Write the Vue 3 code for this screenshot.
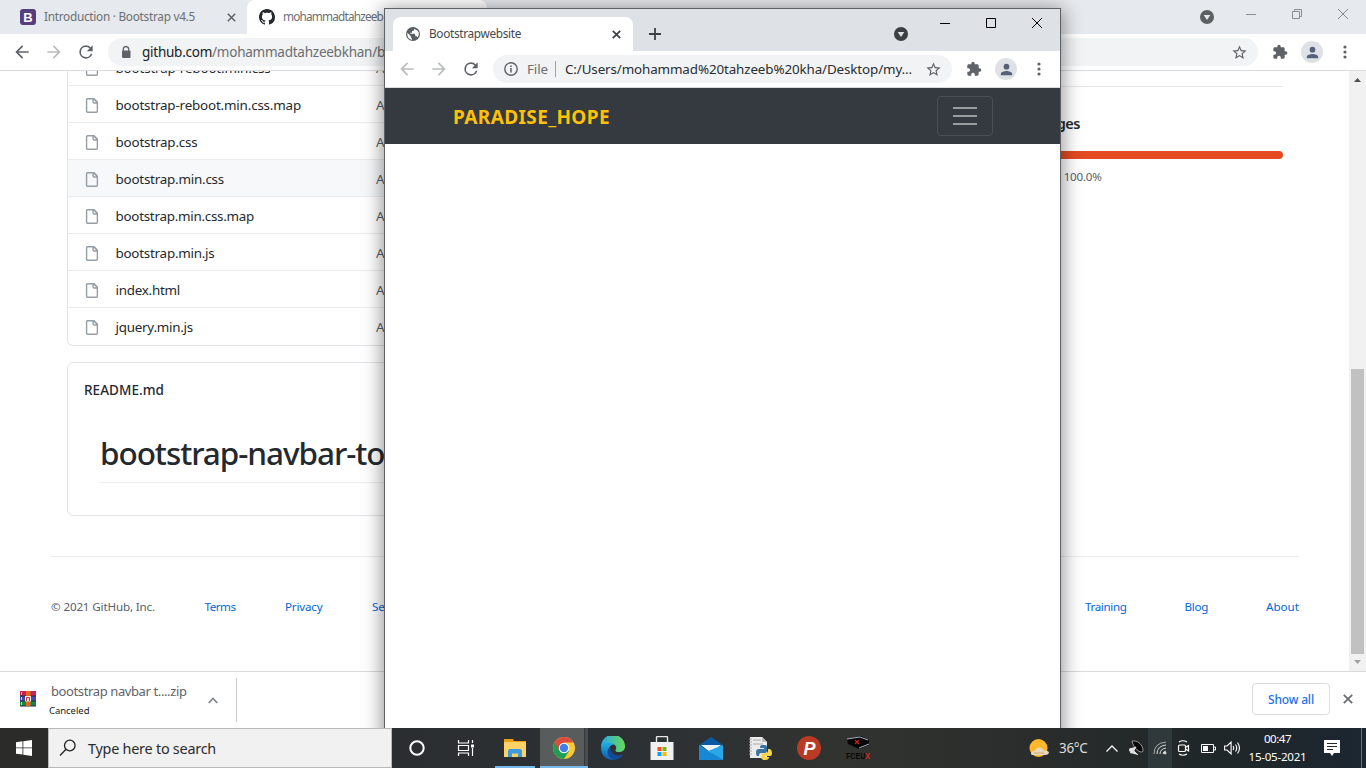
<script setup>
const files = [
  { name: 'bootstrap-reboot.min.css', w: 155 },
  { name: 'bootstrap-reboot.min.css.map', w: 185.5 },
  { name: 'bootstrap.css', w: 82 },
  { name: 'bootstrap.min.css', w: 108.5, active: true },
  { name: 'bootstrap.min.css.map', w: 138.5 },
  { name: 'bootstrap.min.js', w: 99 },
  { name: 'index.html', w: 64.5 },
  { name: 'jquery.min.js', w: 77.5 },
]

// Tracks a label so that it fills the given width in pixels.
const vFit = {
  mounted(el, { value }) {
    const natural = el.getBoundingClientRect().width
    el.style.letterSpacing = (value - natural) / el.textContent.length + 'px'
  },
}

const star = 'M22 9.24l-7.19-.62L12 2 9.19 8.63 2 9.24l5.46 4.73L5.82 21 12 17.27 18.18 21l-1.63-7.03L22 9.24zM12 15.4l-3.76 2.27 1-4.28-3.32-2.88 4.38-.38L12 6.1l1.71 4.04 4.38.38-3.32 2.88 1 4.28L12 15.4z'
const puzzle = 'M20.5 11H19V7c0-1.1-.9-2-2-2h-4V3.5a2.5 2.5 0 0 0-5 0V5H4c-1.1 0-2 .9-2 2v3.8h1.5a2.7 2.7 0 0 1 0 5.4H2V20c0 1.1.9 2 2 2h3.8v-1.5a2.7 2.7 0 0 1 5.4 0V22H17c1.1 0 2-.9 2-2v-4h1.5a2.5 2.5 0 0 0 0-5z'
const back = 'M20 11H7.83l5.59-5.59L12 4l-8 8 8 8 1.41-1.41L7.83 13H20v-2z'
const fwd = 'M12 4l-1.41 1.41L16.17 11H4v2h12.17l-5.58 5.59L12 20l8-8z'
const reload = 'M17.65 6.35A7.96 7.96 0 0 0 12 4a8 8 0 1 0 7.73 10h-2.08A6 6 0 1 1 12 6c1.66 0 3.14.69 4.22 1.78L13 11h7V4l-2.35 2.35z'
const person = 'M12 12a4 4 0 1 0 0-8 4 4 0 0 0 0 8zm0 2c-2.67 0-8 1.34-8 4v2h16v-2c0-2.66-5.33-4-8-4z'
const octocat = 'M8 0C3.58 0 0 3.58 0 8c0 3.54 2.29 6.53 5.47 7.59.4.07.55-.17.55-.38 0-.19-.01-.82-.01-1.49-2.01.37-2.53-.49-2.69-.94-.09-.23-.48-.94-.82-1.13-.28-.15-.68-.52-.01-.53.63-.01 1.08.58 1.23.82.72 1.21 1.87.87 2.33.66.07-.52.28-.87.51-1.07-1.78-.2-3.64-.89-3.64-3.95 0-.87.31-1.59.82-2.15-.08-.2-.36-1.02.08-2.12 0 0 .67-.21 2.2.82.64-.18 1.32-.27 2-.27s1.36.09 2 .27c1.53-1.04 2.2-.82 2.2-.82.44 1.1.16 1.92.08 2.12.51.56.82 1.27.82 2.15 0 3.07-1.87 3.75-3.65 3.95.29.25.54.73.54 1.48 0 1.07-.01 1.93-.01 2.2 0 .21.15.46.55.38A8.01 8.01 0 0 0 16 8c0-4.42-3.58-8-8-8z'
const fileIcon = 'M3.75 1.500a.25.25 0 0 0-.25.25v12.500c0 .14.110.25.25.25h9.500a.25.25 0 0 0 .25-.25V6H10.750A1.750 1.750 0 0 1 9 4.250V1.500H3.750zm6.750.560v2.190c0 .14.110.25.25.25h2.190L10.500 2.060zM2 1.750C2 .780 2.780 0 3.750 0h6.590c.460 0 .900.180 1.230.510l2.920 2.910c.330.330.510.780.510 1.240v9.590A1.750 1.750 0 0 1 13.250 16h-9.500A1.750 1.750 0 0 1 2 14.250V1.750z'
</script>

<template>
  <div class="desktop">
    <div class="browser">
      <header class="strip">
        <div class="tab tab-idle">
          <svg width="16" height="16" viewBox="0 0 16 16"><rect width="16" height="16" rx="3" fill="#563d7c" /><text x="8" y="12.700" text-anchor="middle" font-family="Liberation Sans, sans-serif" font-weight="700" font-size="13" fill="#fff">B</text></svg>
          <span v-fit="151" class="t tab-label">Introduction · Bootstrap v4.5</span>
          <svg class="tab-x" width="9" height="9" viewBox="0 0 9 9"><path d="M.8.8l7.400 7.400M8.200.8L.8 8.200" stroke="#5f6368" stroke-width="1.500" /></svg>
        </div>
        <div class="tab tab-front">
          <svg width="16" height="16" viewBox="0 0 16 16"><path :d="octocat" fill="#24292e" /></svg>
          <span v-fit="100" class="t tab-label">mohammadtahzeeb</span>
        </div>
        <div class="strip-right">
          <svg width="14" height="14" viewBox="0 0 14 14"><circle cx="7" cy="7" r="7" fill="#5c6063" /><path d="M3.700 5h6.600L7 10z" fill="#e6e9ed" /></svg>
          <svg class="wmin" width="10" height="10" viewBox="0 0 10 10"><path d="M0 4.500h10" stroke="#8c8f92" /></svg>
          <svg class="wmax" width="10" height="10" viewBox="0 0 10 10" fill="none" stroke="#8c8f92"><path d="M.5 2.500h7v7h-7zM2.500 2.500v-2h7v7h-2" /></svg>
          <svg width="10" height="10" viewBox="0 0 10 10"><path d="M0 0l10 10M10 0L0 10" stroke="#85888b" /></svg>
        </div>
      </header>
      <div class="toolbar">
        <svg class="nav" width="20" height="20" viewBox="0 0 24 24"><path :d="back" fill="#5f6368" /></svg>
        <svg class="nav" width="20" height="20" viewBox="0 0 24 24"><path :d="fwd" fill="#babcbe" /></svg>
        <svg class="nav" width="20" height="20" viewBox="0 0 24 24"><path :d="reload" fill="#5f6368" /></svg>
        <div class="omni">
          <svg class="lock" width="10" height="13" viewBox="0 0 10 13"><path d="M2.300 5V3.300a2.700 2.700 0 0 1 5.400 0V5" fill="none" stroke="#5f6368" stroke-width="1.300" /><rect x="1" y="4.500" width="8.500" height="7.500" rx="1" fill="#5f6368" /></svg>
          <span v-fit="243" class="t url"><b>github.com</b>/mohammadtahzeebkhan/b</span>
          <svg class="star" width="17" height="17" viewBox="0 0 24 24"><path :d="star" fill="#5f6368" /></svg>
        </div>
        <svg class="puzzle" width="16" height="16" viewBox="0 0 24 24"><path :d="puzzle" fill="#5f6368" /></svg>
        <span class="avatar"><svg width="17" height="17" viewBox="0 0 24 24"><path :d="person" fill="#556177" /></svg></span>
        <svg class="dots" width="4" height="14" viewBox="0 0 4 14" fill="#5f6368"><circle cx="2" cy="2" r="1.600" /><circle cx="2" cy="7" r="1.600" /><circle cx="2" cy="12" r="1.600" /></svg>
      </div>

      <div class="viewport">
        <div class="page">
          <div class="columns">
            <main>
              <div class="files">
                <div v-for="f in files" :key="f.name" class="row" :class="{ active: f.active }">
                  <svg width="15" height="15" viewBox="0 0 16 16"><path :d="fileIcon" fill="#959da5" fill-rule="evenodd" /></svg>
                  <span class="fname"><span v-fit="f.w" class="t">{{ f.name }}</span></span>
                  <span class="t msg">Add files via upload</span>
                </div>
              </div>
              <section class="readme">
                <span v-fit="80" class="t readme-name">README.md</span>
                <h1><span v-fit="346" class="t">bootstrap-navbar-toggle</span></h1>
              </section>
            </main>
            <aside>
              <h2><span v-fit="73" class="t">Languages</span></h2>
              <div class="bar"></div>
              <div class="lang"><span class="t">HTML</span><span v-fit="38" class="t pct">100.0%</span></div>
            </aside>
          </div>
          <footer>
            <div class="links left">
              <span v-fit="104" class="t muted">© 2021 GitHub, Inc.</span>
              <span v-fit="31" class="t">Terms</span>
              <span v-fit="37.500" class="t">Privacy</span>
              <span v-fit="43" class="t">Security</span>
            </div>
            <div class="links right">
              <span v-fit="41.500" class="t">Training</span>
              <span v-fit="23.500" class="t">Blog</span>
              <span v-fit="33" class="t">About</span>
            </div>
          </footer>
        </div>
        <div class="scroll">
          <svg width="7" height="4" viewBox="0 0 7 4"><path d="M0 4h7L3.500 0z" fill="#505050" /></svg>
          <div class="thumb"></div>
          <svg width="7" height="4" viewBox="0 0 7 4"><path d="M0 0h7L3.500 4z" fill="#a3a3a3" /></svg>
        </div>
      </div>

      <div class="shelf">
        <svg class="rar" width="16" height="16" viewBox="0 0 16 16"><rect y="0" width="16" height="5" fill="#c92255" /><rect y="5" width="16" height="5" fill="#454bb0" /><rect y="10" width="16" height="5" fill="#168846" /><path d="M0 5h16M0 10h16M0 15h16" stroke="#222845" /><path d="M1.500 1v3M1.500 6v3M1.500 11v3" stroke="#f2d34c" /><rect x="6" width="4.500" height="15" fill="#e36a1c" /><rect x="5" y="5" width="6" height="5.500" fill="#f4e9df" /><path d="M6.500 10V6.500h3V10" fill="none" stroke="#c63a20" /></svg>
        <div class="dl">
          <span v-fit="135.500" class="t dl-name">bootstrap navbar t....zip</span>
          <span v-fit="40.500" class="t dl-state">Canceled</span>
        </div>
        <svg class="dl-chev" width="10" height="7" viewBox="0 0 10 7"><path d="M.7 6L5 1.500 9.300 6" fill="none" stroke="#80868b" stroke-width="1.700" /></svg>
        <div class="dl-sep"></div>
        <button class="show"><span v-fit="46" class="t">Show all</span></button>
        <svg class="shelf-x" width="10" height="10" viewBox="0 0 10 10"><path d="M.8.8l8.400 8.400M9.200.8L.8 9.200" stroke="#6a6e73" stroke-width="1.800" /></svg>
      </div>
    </div>

    <div class="popup">
      <header class="pstrip">
        <div class="ptab">
          <svg width="16" height="16" viewBox="0 0 24 24"><circle cx="12" cy="12" r="10.500" fill="#5a5e63" /><path d="M3.500 10l5 5v1.500l2 2.500v1.500C6 20 3 16 3.500 10zM14 4.500l-1 2.500-2.500.5V10H8v1.500h6l1.500 1.500v2.500h2l1.500 1.500q2.500-3 1.500-7.500Q19 6 14 4.500z" fill="#fff" /></svg>
          <span v-fit="92" class="t ptab-label">Bootstrapwebsite</span>
          <svg class="px" width="9" height="9" viewBox="0 0 9 9"><path d="M.8.8l7.400 7.400M8.200.8L.8 8.200" stroke="#3c4043" stroke-width="1.700" /></svg>
        </div>
        <svg class="plus" width="12" height="12" viewBox="0 0 12 12"><path d="M6 0v12M0 6h12" stroke="#3c4043" stroke-width="1.800" /></svg>
        <svg class="pdrop" width="14" height="14" viewBox="0 0 14 14"><circle cx="7" cy="7" r="7" fill="#3c4043" /><path d="M3.700 5h6.600L7 10z" fill="#dee1e6" /></svg>
        <div class="pctl">
          <svg width="10" height="10" viewBox="0 0 10 10"><path d="M0 5.500h10" stroke="#000" /></svg>
          <svg width="10" height="10" viewBox="0 0 10 10"><path d="M.5.5h9v9h-9z" fill="none" stroke="#000" /></svg>
          <svg width="10" height="10" viewBox="0 0 10 10"><path d="M0 0l10 10M10 0L0 10" stroke="#000" /></svg>
        </div>
      </header>
      <div class="ptoolbar">
        <svg class="nav" width="20" height="20" viewBox="0 0 24 24"><path :d="back" fill="#babcbe" /></svg>
        <svg class="nav" width="20" height="20" viewBox="0 0 24 24"><path :d="fwd" fill="#babcbe" /></svg>
        <svg class="nav" width="20" height="20" viewBox="0 0 24 24"><path :d="reload" fill="#5f6368" /></svg>
        <div class="omni pomni">
          <svg width="14" height="14" viewBox="0 0 14 14"><circle cx="7" cy="7" r="6.200" fill="none" stroke="#5f6368" stroke-width="1.400" /><path d="M7 6v4.500M7 3.500V5" stroke="#5f6368" stroke-width="1.500" /></svg>
          <span v-fit="21" class="t scheme">File</span>
          <i class="vsep"></i>
          <span v-fit="347" class="t path">C:/Users/mohammad%20tahzeeb%20kha/Desktop/my...</span>
          <svg class="star" width="17" height="17" viewBox="0 0 24 24"><path :d="star" fill="#5f6368" /></svg>
        </div>
        <svg class="puzzle" width="16" height="16" viewBox="0 0 24 24"><path :d="puzzle" fill="#5f6368" /></svg>
        <span class="avatar"><svg width="17" height="17" viewBox="0 0 24 24"><path :d="person" fill="#556177" /></svg></span>
        <svg class="dots" width="4" height="14" viewBox="0 0 4 14" fill="#5f6368"><circle cx="2" cy="2" r="1.600" /><circle cx="2" cy="7" r="1.600" /><circle cx="2" cy="12" r="1.600" /></svg>
      </div>
      <nav class="navbar">
        <span v-fit="157" class="t brand">PARADISE_HOPE</span>
        <button class="toggler"><i></i><i></i><i></i></button>
      </nav>
    </div>

    <div class="taskbar">
      <div class="start"><svg width="16" height="16" viewBox="0 0 16 16" fill="#fff"><path d="M0 2.200l6.500-.9v6.200H0zM7.300 1.200L16 0v7.500H7.300zM0 8.300h6.500v6.300L0 13.700zM7.300 8.300H16V16l-8.700-1.200z" /></svg></div>
      <div class="search">
        <svg width="18" height="18" viewBox="0 0 18 18" fill="none" stroke="#222" stroke-width="1.300"><circle cx="10.800" cy="6.500" r="5.300" /><path d="M7 10.300L1 16.500" /></svg>
        <span v-fit="128" class="t">Type here to search</span>
      </div>
      <div class="apps">
        <div class="app"><svg width="16" height="16" viewBox="0 0 16 16"><circle cx="8" cy="8" r="6.700" fill="none" stroke="#fff" stroke-width="2" /></svg></div>
        <div class="app"><svg width="18" height="16" viewBox="0 0 18 16" fill="none" stroke="#fff" stroke-width="1.200"><path d="M1.500 0v3h10V0M1.500 16v-3h10v3M1.500 5.500h10v5h-10zM15.500 0v3M15.500 8v8" /><path d="M14 4.500h3v3h-3z" fill="#fff" stroke="none" /></svg></div>
        <div class="app open"><svg width="22" height="19" viewBox="0 0 22 19"><path d="M0 0h9l1 2h12v16H0z" fill="#e8a113" /><path d="M0 3h22v15H0z" fill="#fcd266" /><path d="M4 18v-6.500l1.500-1.500h11l1.500 1.500V18h-4v-3.500H8V18z" fill="#3c9ade" /></svg></div>
        <div class="app open current"><svg width="22" height="22" viewBox="0 0 22 22"><circle cx="11" cy="11" r="11" fill="#fcc934" /><path d="M11 11L1.500 5.500A11 11 0 0 0 11 22l5-8z" fill="#1e9e55" /><path d="M1.500 5.500A11 11 0 0 1 20.500 5.500H11v5.500l-4.800 2.800z" fill="#de4a3d" /><circle cx="11" cy="11" r="5.200" fill="#fff" /><circle cx="11" cy="11" r="4.200" fill="#3f7ee8" /></svg></div>
        <div class="app"><svg width="24" height="24" viewBox="0 0 24 24"><defs><linearGradient id="eg" x1="0" x2="1"><stop offset="0" stop-color="#2aa7e5" /><stop offset="1" stop-color="#67db58" /></linearGradient><linearGradient id="eb" x1="0" x2="0" y1="0" y2="1"><stop offset="0" stop-color="#1db2e6" /><stop offset="1" stop-color="#1258a8" /></linearGradient></defs><path d="M0 11a12 12 0 0 1 24-.5c0 4-3 5.500-6 5.500-2.500 0-4-1-3.500-2C18 8 8 5 0 11z" fill="url(#eg)" /><path d="M0 12C1 6 9 5 13 8.500c-5 .5-6 5-3.500 8.500 2.700 3.700 7.500 4 12.500 1.500C17 27 0 26 0 12z" fill="url(#eb)" /><path d="M9 11c-4 3-3 10 3 12.500 4 .5 8-1.500 10-5-5 2-11.500 1.500-13-7.500z" fill="#124b93" /></svg></div>
        <div class="app"><svg width="24" height="24" viewBox="0 0 24 24"><path d="M6.500 7V1.500q0-1 1-1h9q1 0 1 1V7" fill="none" stroke="#e7e7e7" stroke-width="1.400" /><path d="M.5 6h23v18h-23z" fill="#f1f1f1" /><path d="M7.500 11h4v4h-4z" fill="#f25022" /><path d="M12.500 11h4v4h-4z" fill="#7fba00" /><path d="M7.500 16h4v4h-4z" fill="#00a4ef" /><path d="M12.500 16h4v4h-4z" fill="#ffb900" /></svg></div>
        <div class="app"><svg width="24" height="23" viewBox="0 0 24 23"><path d="M0 8l12-8 12 8v2H0z" fill="#0c59a4" /><path d="M2 8h20L12 16z" fill="#eef3f8" /><path d="M0 8l24 15H0z" fill="#1688d5" /><path d="M24 8v15L9 14z" fill="#29a7e9" /></svg></div>
        <div class="app"><svg width="24" height="24" viewBox="0 0 24 24"><path d="M2 1h12l5 5v16H2z" fill="#ececec" /><path d="M14 1v5h5" fill="#bbb" /><path d="M1 3h3M1 6h3M1 9h3M1 12h3M1 15h3M1 18h3M5 4h8M5 8h10" stroke="#aaa" /><path d="M14 9h3q2 0 2 2v4q0 2-2 2h-4q-2 0-2 3H9q-1-1-1-4 0-3 3-3h5v-1h-4q0-3 2-3z" fill="#3973a6" /><path d="M20 13h2q2 1 2 4t-2 3h-5v1h4q0 3-3.500 3T13 22v-3q0-2 2-2h3q2 0 2-2z" fill="#ffd748" /></svg></div>
        <div class="app"><svg width="24" height="24" viewBox="0 0 24 24"><circle cx="12" cy="12" r="12" fill="#b93b25" /><text x="12.500" y="18.500" text-anchor="middle" font-family="Liberation Sans, sans-serif" font-weight="700" font-style="italic" font-size="18" fill="#fff">P</text></svg></div>
        <div class="app"><svg width="26" height="24" viewBox="0 0 26 24"><path d="M2 3l14-3 8 4v5l-10 4L3 8z" fill="#050505" /><path d="M2 3l13-2 8 3M14 12l10-4" fill="none" stroke="#a8b1c8" /><path d="M10 4l4 4M14 4l-4 4" stroke="#cf251b" stroke-width="1.200" /><text x="1" y="22.500" textLength="24" lengthAdjust="spacingAndGlyphs" font-family="Liberation Sans, sans-serif" font-weight="700" font-size="9.500" fill="#080808">FCEU<tspan fill="#db2918">X</tspan></text></svg></div>
      </div>
      <div class="tray">
        <div class="weather">
          <svg width="21" height="19" viewBox="0 0 21 19"><circle cx="9.500" cy="9" r="9" fill="#fdb92b" /><path d="M2 15q0-3 4-3 1-4 5-3.500 3 .5 3.500 3Q20 11 20 14q-1 2-4 2H4q-2 0-2-1z" fill="#e9d9c2" /><path d="M5 14h10" stroke="#d2a566" /></svg>
          <span v-fit="28.500" class="t">36°C</span>
        </div>
        <div class="ti"><svg width="12" height="7" viewBox="0 0 12 7"><path d="M.5 6.500L6 1l5.500 5.500" fill="none" stroke="#fff" stroke-width="1.300" /></svg></div>
        <div class="ti"><svg width="16" height="16" viewBox="0 0 16 16"><path d="M4 1c6-1 11 4 11 10-1 3-9-1-11-10z" fill="#050505" stroke="#bbb" stroke-width=".8" /><path d="M8 7L2 9l3 3zM2 13l3-3 5 5" fill="#ddd" stroke="#ddd" /><circle cx="3" cy="10" r="2" fill="#e5e5e5" /></svg></div>
        <div class="ti lit"><svg width="14" height="14" viewBox="0 0 14 14" fill="none" stroke="#ddd"><path d="M1 13Q1 2 13 1" opacity=".7" /><path d="M4 13q0-8 9-9M7 13q0-5 6-6M10 13q0-2.500 3-3" /><circle cx="12" cy="12" r="1" fill="#fff" /></svg></div>
        <div class="ti"><svg width="14" height="16" viewBox="0 0 14 16" fill="none" stroke="#fff" stroke-width="1.200"><rect x="1.500" y="5" width="7" height="6.500" rx="1.300" /><path d="M8.500 7.500L11.500 5.500v5.500L8.500 9M2 2q4-2.500 8 0M2 14q4 2.500 8 0" /></svg></div>
        <div class="ti"><svg width="15" height="9" viewBox="0 0 15 9"><path d="M.5.5h12v8H.5zM13 3h1.500v3H13" fill="none" stroke="#fff" /><path d="M2 2h5v5H2z" fill="#fff" /></svg></div>
        <div class="ti"><svg width="17" height="14" viewBox="0 0 17 14" fill="none" stroke="#fff" stroke-width="1.100"><path d="M.6 5h2.500l4-4v12l-4-4H.6zM9 5q1.500 2 0 4M11.500 3.500q2.500 3.500 0 7M13.500 1.500q4 5.500 0 11" /></svg></div>
        <div class="clock"><span v-fit="27" class="t">00:47</span><span v-fit="58" class="t">15-05-2021</span></div>
        <div class="note"><svg width="16" height="16" viewBox="0 0 16 16"><path d="M0 0h16v13h-6l-2 3-2-3H0z" fill="#fff" /><path d="M3 3.500h10M3 6.500h10M3 9.500h6" stroke="#202830" /></svg></div>
        <div class="peek"></div>
      </div>
    </div>
  </div>
</template>

<style>
html, body { margin: 0; overflow: hidden; }
</style>

<style scoped>
* { box-sizing: border-box; }
svg { display: block; flex: none; }
.desktop { position: relative; width: 1366px; height: 768px; overflow: hidden; background: #fff; font-family: "Noto Sans", "Open Sans", sans-serif; }
.t { display: inline-block; white-space: nowrap; flex: none; }
button { padding: 0; background: none; font: inherit; }
.browser { display: flex; flex-direction: column; height: 728px; }
.strip { display: flex; height: 34px; flex: none; background: #e6e9ed; }
.tab { display: flex; align-items: center; height: 34px; font-size: 11.800px; color: #6b6f73; }
.tab-label { margin-top: -2px; }
.tab-idle { width: 247px; padding-left: 20px; gap: 8px; }
.tab-x { margin-left: 24px; }
.tab-front { width: 240px; padding-left: 12px; gap: 8px; background: #fff; border-radius: 8px 8px 0 0; }
.strip-right { display: flex; margin-left: auto; padding: 10px 18px 0 0; }
.wmin { margin-left: 32px; }
.wmax { margin: -1px 36px 0; }
.strip-right svg:last-child { margin-top: -1px; }
.toolbar, .ptoolbar { display: flex; align-items: center; height: 37px; flex: none; padding-left: 12px; background: #fff; border-bottom: 1px solid #d9dbde; }
.nav { margin-right: 12px; }
.omni { display: flex; align-items: center; height: 28px; border-radius: 14px; background: #f1f3f4; font-size: 13.500px; color: #6a6e73; }
.toolbar .omni { width: 1150px; padding-left: 13px; }
.lock { margin-right: 11px; }
.url b { font-weight: 400; color: #202124; }
.star { margin-left: auto; margin-right: 10px; }
.puzzle { margin-left: 14px; }
.avatar { display: flex; align-items: center; justify-content: center; width: 22px; height: 22px; margin: 0 20px 0 13px; border-radius: 50%; background: #dee1e6; }
.viewport { display: flex; flex: 1; min-height: 0; }
.page { flex: 1; overflow: hidden; padding: 0 50px 0 51px; }
.columns { display: flex; justify-content: space-between; height: 485px; padding: 0 16px; }
main { width: 896px; }
.files { display: flex; flex-direction: column; justify-content: flex-end; height: 275px; overflow: hidden; border: 1px solid #e1e4e8; border-top: 0; border-radius: 0 0 6px 6px; font-size: 13.400px; color: #24292e; }
.row { display: flex; align-items: center; flex: none; height: 37px; padding: 2px 0 0 16px; border-top: 1px solid #e9ebef; }
.row:last-child { height: 38px; padding-top: 1px; }
.row.active { background: #f6f8fa; }
.fname { width: 260.500px; margin-left: 16.500px; }
.msg { color: #586069; }
.readme { height: 154px; margin-top: 16px; padding: 15px 16px; border: 1px solid #e1e4e8; border-radius: 6px; color: #24292e; }
.readme-name { height: 22px; line-height: 22px; font-size: 13.500px; font-weight: 500; }
h1 { margin: 25px 16px 0; height: 57px; line-height: 54px; border-bottom: 1px solid #eaecef; font-size: 31.500px; font-weight: 500; }
aside { width: 296px; margin-top: 15px; border-top: 1px solid #e6e8ec; }
h2 { margin: 24px 0 0; padding-left: 20px; font-size: 14.500px; line-height: 24px; font-weight: 600; color: #24292e; }
.bar { height: 8px; margin-top: 16px; border-radius: 4px; background: #e44b23; }
.lang { display: flex; gap: 4px; padding-left: 41px; margin-top: 9px; font-size: 11.600px; line-height: 18px; color: #586069; }
footer { display: flex; justify-content: space-between; padding-top: 41px; border-top: 1px solid #eaecef; font-size: 11.600px; line-height: 18px; color: #0366d6; }
.links { display: flex; }
.left { gap: 49.500px; }
.right { gap: 58px; }
.muted { color: #586069; }
.scroll { display: flex; flex-direction: column; align-items: center; width: 17px; padding: 7px 0 7px; background: #f1f1f1; }
.thumb { width: 13px; height: 285px; margin: auto 0 6px; background: #c1c1c1; }
.shelf { display: flex; align-items: center; height: 57px; flex: none; padding: 0 13px 0 20px; border-top: 1px solid #d9dbde; }
.rar, .shelf-x { margin-bottom: 2px; }
.dl { display: flex; flex-direction: column; width: 138px; margin: -1px 20px 0 13px; }
.dl-name { align-self: flex-start; margin-left: 2px; font-size: 13px; line-height: 20px; color: #5f6368; }
.dl-state { align-self: flex-start; font-size: 9.500px; line-height: 16px; margin-top: 2px; color: #202124; }
.dl-chev { margin-right: 18px; margin-left: 1px; }
.dl-sep { width: 1px; height: 44px; background: #c9cbce; }
.show { width: 78px; height: 32px; margin: -2px 13px 0 auto; border: 1px solid #dadce0; border-radius: 4px; color: #1a73e8; font-size: 12px; font-weight: 500; }

.popup { position: absolute; left: 384px; top: 8px; width: 677px; height: 760px; border: 1px solid #5d6064; background: #fff; box-shadow: 0 3px 18px 2px rgba(0, 0, 0, .42); }
.pstrip { display: flex; height: 42px; padding-left: 8px; background: #dee1e6; }
.ptab { display: flex; align-items: center; width: 240px; height: 34px; margin-top: 8px; padding: 0 12px; border-radius: 8px 8px 0 0; background: #fff; font-size: 11.800px; color: #45494d; }
.ptab-label { margin: -2px 0 0 8px; }
.px { margin-left: auto; }
.plus { margin: 19px 0 0 16px; }
.pdrop { margin: 18px 0 0 233px; }
.pctl { display: flex; gap: 36px; margin: 9px 0 0 32px; }
.pomni { width: 459px; padding-left: 11px; font-size: 13.400px; }
.scheme { margin-left: 9px; }
.vsep { width: 1px; height: 16px; margin: 0 9px 0 7px; background: #9aa0a6; }
.path { color: #2b2d31; }
.navbar { display: flex; align-items: center; justify-content: space-between; height: 56px; padding: 0 67px 0 68px; background: #343a40; }
.brand { color: #ffc107; font-size: 19px; font-weight: 700; padding-top: 1px; }
.toggler { display: flex; flex-direction: column; align-items: center; justify-content: center; gap: 6px; width: 56px; height: 40px; border: 1px solid #484e53; border-radius: 4px; }
.toggler i { width: 24px; height: 2px; background: #999c9f; }

.taskbar { position: relative; display: flex; height: 40px; background: linear-gradient(90deg, #2b2c2a 0, #2b2e30 30%, #2b3035 43%, #31332f 62%, #2a2d2c 75%, #202728 88%, #1c2631 100%); color: #fff; }
.start { display: flex; align-items: center; justify-content: center; width: 48px; }
.search { display: flex; align-items: center; width: 344px; padding-left: 10px; gap: 11px; border: 1px solid #b9b9b9; background: #f1f1f1; color: #2b2b2b; font-size: 14.400px; }
.apps { display: flex; }
.app { display: flex; align-items: center; justify-content: center; width: 49px; }
.app.open { background: linear-gradient(#76b9ed, #76b9ed) 5px 38px / 40px 2px no-repeat; }
.app.current { background: linear-gradient(#76b9ed, #76b9ed) 1px 38px / 48px 2px no-repeat, linear-gradient(90deg, transparent 1px, #595c5d 1px, #595c5d 45px, #34373a 45px, #34373a 46px, #4a4d4f 46px); }
.tray { display: flex; align-items: center; margin-left: auto; height: 40px; }
.weather { display: flex; align-items: center; gap: 9px; width: 71px; color: #ddd; font-size: 13.500px; }
.ti { display: flex; align-items: center; justify-content: center; width: 24px; height: 40px; }
.lit { background: #2f383a; }
.clock { display: flex; flex-direction: column; align-items: center; width: 68px; padding-right: 1px; font-size: 11.600px; line-height: 18px; margin-top: -1px; }
.note { display: flex; justify-content: center; width: 40px; }
.peek { width: 5px; height: 40px; margin-left: 9px; border-left: 1px solid #6b727a; }
</style>
